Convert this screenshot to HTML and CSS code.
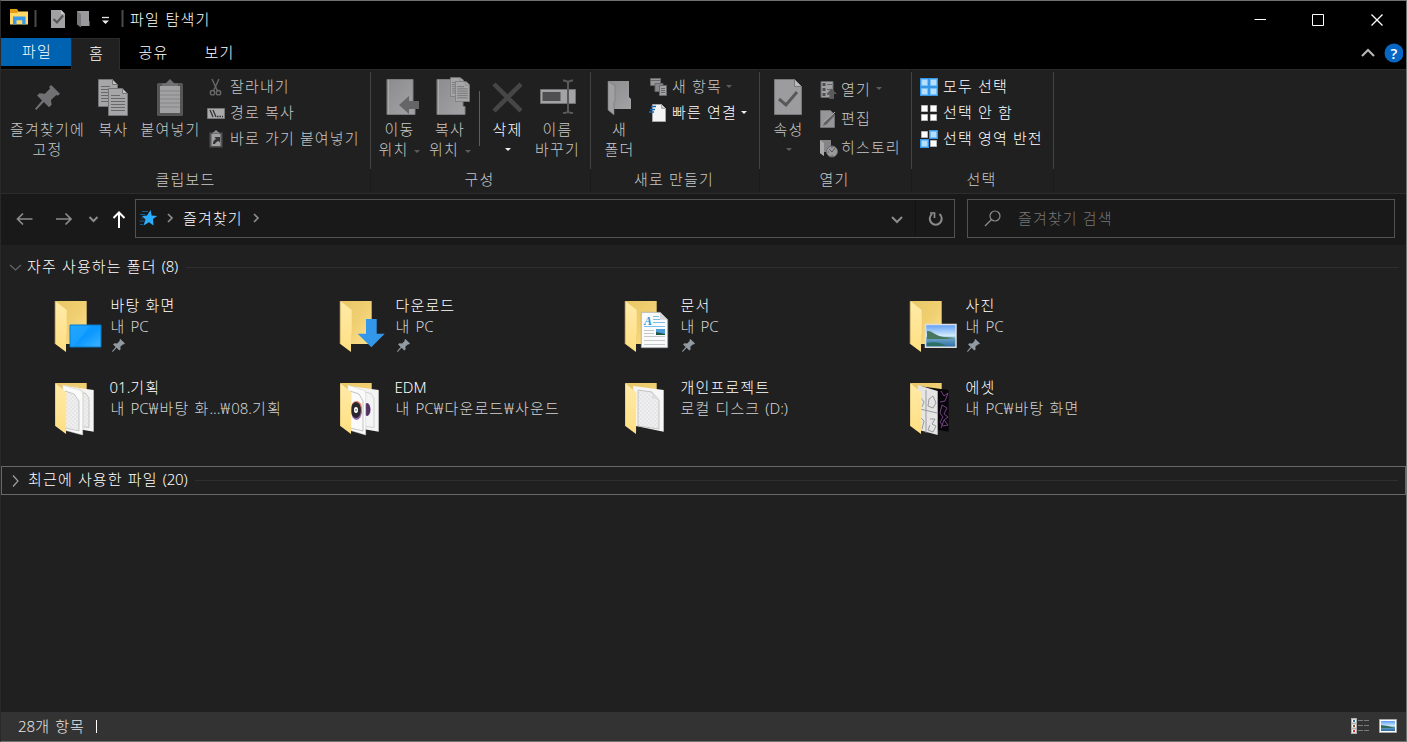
FILE: index.html
```html
<!DOCTYPE html>
<html lang="ko">
<head>
<meta charset="utf-8">
<title>파일 탐색기</title>
<link rel="stylesheet" href="styles.css">
</head>
<body>
<svg class="defs" width="0" height="0">
  <defs>
    <linearGradient id="gBack" x1="0" y1="0" x2="1" y2="1"><stop offset="0" stop-color="#e9c766"/><stop offset=".5" stop-color="#f0cf72"/><stop offset="1" stop-color="#ffe38e"/></linearGradient>
    <linearGradient id="gFlap" x1="0" y1="0" x2="0" y2="1"><stop offset="0" stop-color="#ffeaa8"/><stop offset="1" stop-color="#ffdf82"/></linearGradient>
    <linearGradient id="gBlue" x1="0" y1="0" x2="1" y2="1"><stop offset="0" stop-color="#1aa3ff"/><stop offset=".5" stop-color="#0a97ff"/><stop offset="1" stop-color="#3cb4ff"/></linearGradient>
    <linearGradient id="gSky" x1="0" y1="0" x2="0" y2="1"><stop offset="0" stop-color="#5b9cf5"/><stop offset=".5" stop-color="#d4ecfb"/><stop offset=".6" stop-color="#6fa6c4"/><stop offset="1" stop-color="#2c6aa8"/></linearGradient>
    <linearGradient id="gGray" x1="0" y1="0" x2="1" y2="1"><stop offset="0" stop-color="#8c8c8e"/><stop offset="1" stop-color="#a3a3a5"/></linearGradient>
    <pattern id="check" width="4" height="4" patternUnits="userSpaceOnUse"><path d="M0 0h4v4H0z" fill="#efefef"/><path d="M0 0l4 4M4 0l-4 4" stroke="#e2e3e5" stroke-width=".7"/></pattern>
  </defs>
  <symbol id="folder" viewBox="0 0 52 56"><path d="M2.300 2h31.400v43H2.300z" fill="url(#gBack)"/></symbol>
  <symbol id="flap" viewBox="0 0 52 56"><path d="M2.300 2L13.700 11V35L13 36V53L2.300 45z" fill="url(#gFlap)"/><path d="M2 2v43" stroke="#b79b57" stroke-width=".6"/></symbol>
  <symbol id="flapFull" viewBox="0 0 52 56"><path d="M2.300 2.300L13.500 11.500L13 53L2.300 45z" fill="url(#gFlap)"/></symbol>
  <symbol id="pin" viewBox="0 0 24 24"><path d="M15.500 0L24 8.300L21.700 10.300L20.500 9.600L15.300 14.500L16 19L13.500 21.300L8.500 16.300L1.300 24L0 22.800L6.800 14.800L2 10L4.300 8L9.500 8.500L14.500 3.300L13.600 2z"/></symbol>
  <symbol id="page" viewBox="0 0 20 28"><path d="M.5.500h14l5 5v22H.500z" fill="#a6a6a8" stroke="#747476"/><path d="M14.500.500v5h5z" fill="#c2c2c4" stroke="#747476"/><path d="M3 7.500h9M3 10.500h14M3 13.500h14M3 16.500h14M3 19.500h14M3 22.500h14" stroke="#68686a"/></symbol>
</svg>

<div class="window">
  <header class="titlebar">
    <div class="quick">
      <svg width="120" height="26" viewBox="0 0 120 26">
        <path d="M1 3.500h7l1 2h10v13H1z" fill="#ffd867"/><path d="M1 3h7l1.500 2.500L8 7H1z" fill="#e59d13"/>
        <path d="M4 18.500v-8h12.500v8h-3.300v-4.300H7.500v4.300z" fill="#3897e7"/>
        <path d="M26.500 4v17M113.500 4v17" stroke="#4b4b4b" stroke-width="2"/>
        <path d="M42 4h10l4 4v14H42z" fill="#a1a1a3"/><path d="M52 4l4 4h-4z" fill="#cacaca"/><path d="M44.500 13l3.500 3.500 6-7" stroke="#565658" stroke-width="2.200" fill="none"/>
        <path d="M68 5h12v10h.500v5H71z" fill="#9a9a9c"/><path d="M68 5l4 3v13.500l-4-3z" fill="#777779"/>
        <path d="M93 11.500h7" stroke="#e5e5e5" stroke-width="1.300"/><path d="M93 14.500h7l-3.500 3.500z" fill="#eee"/>
      </svg>
    </div>
    <h1>파일 탐색기</h1>
    <div class="winctl">
      <svg width="130" height="20" viewBox="0 0 130 20" fill="none" stroke="#fff"><path d="M.5 9.500h11.500M58.500 4.500h11v11h-11z"/><path d="M117.500 4.500l11 11M128.500 4.500l-11 11" stroke-width="1.300"/></svg>
    </div>
  </header>

  <nav class="tabs">
    <span class="tab file">파일</span><span class="tab home">홈</span><span class="tab">공유</span><span class="tab view">보기</span>
    <svg class="help" width="42" height="20" viewBox="0 0 42 20"><path d="M1 13l6-6 6 6" fill="none" stroke="#b5b5b5" stroke-width="2.200"/><circle cx="33" cy="10" r="9.500" fill="#0867c5"/><text x="33" y="15.500" class="qmark">?</text></svg>
  </nav>

  <section class="ribbon">
    <div class="group g1">
      <div class="body">
        <div class="big w92"><svg class="ico" width="26" height="40"><use href="#pin" x="1" y="8" width="25" height="25" fill="#717173"/></svg><span>즐겨찾기에<br>고정</span></div>
        <div class="big w40"><svg class="ico" width="30" height="40"><use href="#page" x="0" y="2" width="20" height="28"/><use href="#page" x="10" y="11" width="20" height="28"/></svg><span>복사</span></div>
        <div class="big w74"><svg class="ico" width="28" height="40"><rect x="1" y="6" width="26" height="33" rx="1.500" fill="#565656"/><path d="M4 9h20v27H4z" fill="#a1a1a3"/><path d="M4 14h20M4 18h20M4 22h20M4 26h20M4 30h20" stroke="#858587"/><path d="M6 9V6.500h3.500L14 2l4.500 4.500H22V9z" fill="#717173"/></svg><span>붙여넣기</span></div>
        <ul class="list">
          <li><svg width="18" height="20" fill="none" stroke="#68686a" stroke-width="1.400"><path d="M5 2l5.500 12M12 2L6.500 14"/><circle cx="5.500" cy="15.700" r="2.200"/><circle cx="11.500" cy="15.700" r="2.200"/></svg>잘라내기</li>
          <li><svg width="18" height="20"><path d="M.5 5.500h17v10H.500z" fill="#aaaaac" stroke="#777"/><path d="M3 7l3 7M6 7l3 7M10 13.500h1.500M12.500 13.500H14M15 13.500h1" stroke="#333" stroke-width="1.300"/></svg>경로 복사</li>
          <li><svg width="18" height="20"><path d="M2.500 3.500h13v15h-13z" fill="#515153"/><path d="M4.500 5h9v12h-9z" fill="#a1a1a3"/><path d="M5 4.500L9 1l4 3.500z" fill="#8b8b8d"/><path d="M6 15c0-3 1-4 3-5L7.500 8H13v5.500l-1.500-1.500C9 13 8.500 14 8 15z" fill="#333"/></svg>바로 가기 붙여넣기</li>
        </ul>
      </div>
      <div class="label">클립보드</div>
    </div>

    <div class="group g2">
      <div class="body">
        <div class="big w56"><svg class="ico shift" width="34" height="40"><path d="M1 2.500h26v27h2v8H1z" fill="url(#gGray)" stroke="#7c7c7e"/><path d="M2.500 3v34" stroke="#aaa"/><path d="M13 28l10-9v5h10v8H23v5z" fill="#656567"/></svg><span>이동<br>위치<i class="arr"></i></span></div>
        <div class="big w45"><svg class="ico shift" width="34" height="40"><path d="M1 2.500h26v27h2v8H1z" fill="url(#gGray)" stroke="#7c7c7e"/><path d="M2.500 3v34" stroke="#aaa"/><use href="#page" x="14" y="0" width="14" height="20"/><use href="#page" x="19" y="4" width="15" height="21"/></svg><span>복사<br>위치<i class="arr"></i></span></div>
        <div class="vsep"></div>
        <div class="big w40 on"><svg class="ico" width="30" height="40"><path d="M2 7l27 27M29 7L2 34" stroke="#464646" stroke-width="4.500"/></svg><span>삭제<br><i class="arr solo"></i></span></div>
        <div class="big w60"><svg class="ico wide" width="38" height="40"><path d="M1.500 12.500h35v14h-35z" fill="#a3a3a5" stroke="#737375"/><path d="M3.500 15h18v9h-18z" fill="#4f4f51"/><path d="M24 3.500c3 0 5 .500 5 3v27c0 2-2 2.500-5 2.500M34 3.500c-3 0-5 .500-5 3M34 36c-3 0-5-.500-5-2.500" fill="none" stroke="#59595b" stroke-width="2"/></svg><span>이름<br>바꾸기</span></div>
      </div>
      <div class="label">구성</div>
    </div>

    <div class="group g3">
      <div class="body">
        <div class="big w56"><svg class="ico" width="26" height="40"><path d="M2 4h21v16l2 2v10H8z" fill="url(#gGray)"/><path d="M2 4l7 5v15l-1 1v13L2 33z" fill="#a0a0a2" stroke="#777" stroke-width=".6"/></svg><span>새<br>폴더</span></div>
        <ul class="list">
          <li><svg width="19" height="20" stroke="#676769"><path d="M1.500 1.500h10v7h-10z" fill="#98989a"/><path d="M6 6.500h8v8H6z" fill="#89898b"/><path d="M10.500 8.500h7v10h-7z" fill="#a1a1a3"/><path d="M12 11.500h4M12 13.500h4M12 15.500h4M1.500 3.500h10"/></svg>새 항목<i class="arr"></i></li>
          <li class="on"><svg width="19" height="20"><path d="M3.500 1.500h9l4 4v13h-13z" fill="#f4f4f4" stroke="#a7a7a7"/><path d="M12.500 1.500v4h4" fill="#ccc" stroke="#aaa"/><path d="M2 3.500h5M1 6.500h5M0 9h5" stroke="#1769b4" stroke-width="1.500"/></svg>빠른 연결<i class="arr"></i></li>
        </ul>
      </div>
      <div class="label">새로 만들기</div>
    </div>

    <div class="group g4">
      <div class="body">
        <div class="big w56"><svg class="ico" width="28" height="40"><path d="M.5 2.500h20l7 7v28H.500z" fill="#9c9c9e" stroke="#777779"/><path d="M20.500 2.500v7h7" fill="#bbb" stroke="#777"/><path d="M5 22l7 6L23 15" fill="none" stroke="#58585a" stroke-width="3"/></svg><span>속성<br><i class="arr solo"></i></span></div>
        <ul class="list tall">
          <li><svg width="18" height="20"><path d="M1 1.500h12v16H1z" fill="#a0a0a2" stroke="#69696b"/><path d="M2.500 3h3v3h-3zM2.500 8h3v3h-3zM2.500 13h3v3h-3z" fill="#4f4f51"/><path d="M7 4.500h5M7 9.500h5M7 14.500h3" stroke="#666"/><path d="M11.500 8.500L17 14h-3v5H9.500v-5h-3z" fill="#5b5b5d"/></svg>열기<i class="arr"></i></li>
          <li><svg width="18" height="20"><path d="M.5 1.500h10l4 4v13H.500z" fill="#969698" stroke="#717173"/><path d="M3 17l1.500-4L13 4l2 2-8 9z" fill="#616163"/><path d="M4 13l11-10" stroke="#b6b6b8"/></svg>편집</li>
          <li><svg width="18" height="20"><path d="M0 2h11v12H4v4l-4-3z" fill="#858587"/><path d="M0 2l4 3v13l-4-3z" fill="#aaa"/><circle cx="12" cy="13.500" r="5.500" fill="#9a9a9c" stroke="#68686a"/><path d="M9 11l3 3 3-4M8 14h1M12 9v1M12 17v1" stroke="#555" fill="none"/></svg>히스토리</li>
        </ul>
      </div>
      <div class="label">열기</div>
    </div>

    <div class="group g5">
      <div class="body">
        <ul class="list sel on">
          <li><svg width="19" height="20"><path d="M0 1h18v18H0z" fill="#3697e8"/><path d="M1.500 2.500h6v6h-6zM10.500 2.500h6v6h-6zM1.500 11.500h6v6h-6zM10.500 11.500h6v6h-6z" fill="#b5dfff" stroke="#78bff5"/></svg>모두 선택</li>
          <li><svg width="19" height="20"><path d="M1.500 2.500h6v6h-6zM10.500 2.500h6v6h-6zM1.500 11.500h6v6h-6zM10.500 11.500h6v6h-6z" fill="#fff" stroke="#b7b7b7"/></svg>선택 안 함</li>
          <li><svg width="19" height="20"><path d="M9 1h9v9H9zM0 10h9v9H0z" fill="#3697e8"/><path d="M1.500 2.500h6v6h-6zM10.500 11.500h6v6h-6z" fill="#fff" stroke="#b7b7b7"/><path d="M10.500 2.500h6v6h-6zM1.500 11.500h6v6h-6z" fill="#b5dfff" stroke="#78bff5"/></svg>선택 영역 반전</li>
        </ul>
      </div>
      <div class="label">선택</div>
    </div>
  </section>

  <section class="navbar">
    <svg class="arrows" width="134" height="50" viewBox="1 194 134 50" fill="none" stroke="#8b8b8b" stroke-width="1.700">
      <path d="M32.500 219H18M23 213.500L17.500 219l5.500 5.500M56 219h14.500M65.500 213.500L71 219l-5.500 5.500"/><path d="M89.500 217l4 4 4-4" stroke-width="2"/><path d="M119 228v-15M113.500 218l5.500-5.500 5.500 5.500" stroke="#fff" stroke-width="2"/>
    </svg>
    <div class="address">
      <svg width="46" height="38" viewBox="136 200 46 38"><path d="M150.500 210l1.200 5.500 5.500.500-4.200 3 .500 6.500-4.500-3.300-5.500 3.300 2-6-3.500-3.500 5-.500z" fill="#2badff"/><path d="M142 211.500h6M140 214.500h5M141 218h3M139.500 221h5M140 224.500h3" stroke="#145c8d"/><path d="M168 214l4 4-4 4" fill="none" stroke="#8b8b8b" stroke-width="1.700"/></svg>
      <span>즐겨찾기</span>
      <svg width="12" height="38" viewBox="0 0 12 38"><path d="M4 14l4 4-4 4" fill="none" stroke="#8b8b8b" stroke-width="1.700"/></svg>
      <svg class="end" width="68" height="37" viewBox="886 200 68 37" fill="none" stroke="#8b8b8b" stroke-width="2"><path d="M892 217l5 5 5-5"/><path d="M915.500 200v37" stroke="#121212" stroke-width="1"/><path d="M932 214a6 6 0 1 0 7.500 0"/><path d="M930 213h4.500v5" stroke-width="1.700"/></svg>
    </div>
    <div class="search"><svg width="50" height="37" viewBox="968 200 50 37" fill="none" stroke="#8d8d8d" stroke-width="1.200"><circle cx="995" cy="216" r="5"/><path d="M991.500 219.500L985 226"/></svg><span>즐겨찾기 검색</span></div>
  </section>

  <main class="content">
    <div class="head"><svg width="26" height="20" fill="none" stroke="#666" stroke-width="1.200"><path d="M9 8l5.500 5L20 8"/></svg><h2>자주 사용하는 폴더 <b>(8)</b></h2><hr></div>
    <div class="tiles">
      <article><svg class="fold" viewBox="0 0 52 56"><use href="#folder"/><use href="#flap"/><path d="M17 26h31v22H17z" fill="url(#gBlue)" stroke="#0876c4"/><path d="M37 26.500L21 47.500H17.500V26.500z" fill="#28aaff" opacity=".5"/></svg><div class="txt"><strong>바탕 화면</strong><span>내 <b>PC</b></span><svg class="tpin"><use href="#pin"/></svg></div></article>
      <article><svg class="fold" viewBox="0 0 52 56"><use href="#folder"/><use href="#flap"/><path d="M28 20h10.700v14.700h8L33.300 48.300 19.700 34.700H28z" fill="#3498ea"/></svg><div class="txt"><strong>다운로드</strong><span>내 <b>PC</b></span><svg class="tpin"><use href="#pin"/></svg></div></article>
      <article><svg class="fold" viewBox="0 0 52 56"><use href="#folder"/><use href="#flap"/><path d="M18.300 13.300H37l7.700 7.400v28H18.300z" fill="#fafafa" stroke="#9aa2a9" stroke-width=".7"/><path d="M37 13.300v7.400h7.700z" fill="#d5d5d8"/><text x="21" y="25.500" class="docA">A</text><path d="M30 17.500h6M30 20.500h7M30 23.500h12M21 27.500h21" stroke="#77c0ec"/><path d="M21 31.500h10M21 34.500h10M21 37.500h21M21 41.500h21M21 45.500h21" stroke="#c5c8cb"/><path d="M33 30h9v6h-9z" fill="#4d9ed8"/><path d="M33 33l9 2v1h-9z" fill="#1f5742"/></svg><div class="txt"><strong>문서</strong><span>내 <b>PC</b></span><svg class="tpin"><use href="#pin"/></svg></div></article>
      <article><svg class="fold" viewBox="0 0 52 56"><use href="#folder"/><use href="#flap"/><path d="M17.500 25.500h30.500v22.700H17.500z" fill="url(#gSky)" stroke="#dedede" stroke-width="1.500"/><path d="M19 32c5-1 8 5 17 6l11 1-8 1H19z" fill="#47775f"/><path d="M19 44c8-2 15 0 19 3H19z" fill="#2b7065"/></svg><div class="txt"><strong>사진</strong><span>내 <b>PC</b></span><svg class="tpin"><use href="#pin"/></svg></div></article>
      <article><svg class="fold" viewBox="0 0 52 56"><use href="#folder"/><path d="M11 5l29.700 4v41.700L25 48z" fill="#f4f4f5"/><path d="M27 11l6 1.500 3 5v29l-8-1z" fill="url(#check)" stroke="#9a9a9c" stroke-width=".5"/><path d="M9.700 4l20 6v44L11 49z" fill="#fafafa" stroke="#ccc" stroke-width=".5"/><path d="M12 10l9 3 5 7v30l-14-3z" fill="url(#check)" stroke="#a9a9a9" stroke-width=".6"/><path d="M9.700 4l15 2 6 7v36" fill="none" stroke="#e9dab0" stroke-width=".7"/><use href="#flapFull"/></svg><div class="txt"><strong class="lat"><b>01.</b>기획</strong><span>내 <b>PC<i class="won">₩</i></b>바탕 화<b>...<i class="won">₩</i>08.</b>기획</span></div></article>
      <article><svg class="fold" viewBox="0 0 52 56"><use href="#folder"/><path d="M11 5l29.700 4v41.700L25 48z" fill="#f4f4f5"/><ellipse cx="29" cy="28.500" rx="3.500" ry="6.500" fill="#553064"/><path d="M27 11l6 1.500 3 5v29l-8-1" fill="none" stroke="#b9b9ba" stroke-width=".6"/><path d="M9.700 4l18 6v44L11 49z" fill="#fafafa" stroke="#ccc" stroke-width=".5"/><ellipse cx="18.500" cy="30" rx="5.500" ry="9" fill="#9267a8"/><ellipse cx="18.500" cy="27" rx="5.500" ry="7" fill="#e88467"/><ellipse cx="18" cy="29" rx="5" ry="8" fill="#29272d"/><ellipse cx="18" cy="29" rx="2" ry="3" fill="#fff"/><circle cx="18" cy="29" r=".8" fill="#333"/><path d="M12 10l9 3 4 7v30l-13-3" fill="none" stroke="#aaa" stroke-width=".7"/><use href="#flapFull"/></svg><div class="txt"><strong class="lat"><b>EDM</b></strong><span>내 <b>PC<i class="won">₩</i></b>다운로드<b><i class="won">₩</i></b>사운드</span></div></article>
      <article><svg class="fold" viewBox="0 0 52 56"><use href="#folder"/><path d="M10 5l30.700 4v41.700L13 45z" fill="#f7f7f8"/><path d="M15 9l14 2 7 8v29l-21-3z" fill="url(#check)" stroke="#a5a5a7" stroke-width=".6"/><path d="M29 11v6l7 2z" fill="#ddd"/><use href="#flapFull"/></svg><div class="txt"><strong>개인프로젝트</strong><span>로컬 디스크 <b>(D:)</b></span></div></article>
      <article><svg class="fold" viewBox="0 0 52 56"><use href="#folder"/><path d="M10 5l30.700 4v41.700L25 48z" fill="#08060a"/><path d="M33 10l3 5 4-3-3 8-5 1M34 24l5 3-3 6 4 3-4 3 4 5-5 1-3-4 3-5-3-4zM36 39l-3 8" fill="none" stroke="#724384"/><path d="M9.700 4l20 6v44L11 49z" fill="#e5e5e5"/><path d="M12 28l17 4M18 9v43M21 18l4-3 3 7-3 5-5-2zM13 17l3 4-2 5M22 38h5l-3 5 4 2-3 6-5-2 2-5M13 37l3 3-2 8" fill="none" stroke="#929294" stroke-width=".9"/><use href="#flapFull"/></svg><div class="txt"><strong>에셋</strong><span>내 <b>PC<i class="won">₩</i></b>바탕 화면</span></div></article>
    </div>
    <div class="head boxed"><svg width="26" height="20" fill="none" stroke="#a0a0a0" stroke-width="1.200"><path d="M12 4.500l5 5.500-5 5.500"/></svg><h2>최근에 사용한 파일 <b>(20)</b></h2><hr></div>
  </main>

  <footer class="status">
    <span><b>28</b>개 항목</span><i class="caret"></i>
    <svg class="views" width="48" height="20" viewBox="1351 716 48 20"><path d="M1351 718h6v16h-6z" fill="#b0b0b0"/><path d="M1352 719.500h4v3h-4zM1352 724.500h4v3h-4zM1352 729.500h4v3h-4z" fill="#fff"/><path d="M1353 720h2v2h-2z" fill="#32759d"/><path d="M1353 725h2v2h-2z" fill="#99503b"/><path d="M1353 730h2v2h-2z" fill="#d62e20"/><path d="M1358 720.500h5M1364 720.500h5M1358 725.500h5M1364 725.500h5M1358 730.500h5M1364 730.500h5" stroke="#7b7b7b"/><path d="M1379.500 719.500h17v13h-17z" fill="#fff" stroke="#aaa"/><path d="M1381 721h14v10h-14z" fill="url(#gSky)"/><path d="M1381 725l7 1 7 2h-14z" fill="#356c61"/></svg>
  </footer>
</div>
</body>
</html>
```
FILE: styles.css
```css
* { box-sizing: border-box; }
body {
  margin: 0;
  background: #202020;
  color: #fff;
  font: 15px/20px "Noto Sans", "Noto Sans CJK KR", sans-serif;
  letter-spacing: 1.15px;
  font-weight: 300;
}
h1, h2, ul, hr { margin: 0; padding: 0; font: inherit; }
ul { list-style: none; }
b { font-weight: inherit; letter-spacing: 0; }
strong { font-weight: inherit; }
svg { display: block; flex: none; }
.defs { position: absolute; }
.window {
  width: 1407px; height: 742px; overflow: hidden;
  display: flex; flex-direction: column;
  border: 1px solid #707070;
  border-left-color: #292929;
  background: #202020;
  white-space: nowrap;
}
.titlebar { height: 37px; background: #000; display: flex; align-items: center; padding-bottom: 2px; flex: none; }
.quick { padding-left: 8px; }
.titlebar h1 { margin-left: 1px; letter-spacing: 1.3px; }
.winctl { margin-left: auto; margin-right: 22px; margin-top: 2px; }

.tabs { height: 32px; background: #000; display: flex; border-bottom: 1px solid #2b2b2b; flex: none; }
.tab { width: 65px; padding-left: 2px; text-align: center; line-height: 28px; }
.file { width: 70px; height: 28px; line-height: 27px; background: #0063b1; }
.home { width: 49px; height: 32px; background: #202020; border: 1px solid #2b2b2b; border-bottom: 0; }
.view { width: 67px; }
.help { margin: 5px 3px 0 auto; }
.qmark { font: 600 15px "Open Sans", sans-serif; fill: #fff; text-anchor: middle; letter-spacing: 0; }

.ribbon { height: 124px; display: flex; border-bottom: 1px solid #2c2c2c; flex: none; color: #c8c8c8; }
.group { position: relative; display: flex; flex-direction: column; border-right: 1px solid #1a1a1a; height: 121px; }
.group::after { content: ""; position: absolute; right: -1px; top: 2px; width: 1px; height: 97px; background: #424242; }
.g1 { width: 370px; }
.g2 { width: 220px; }
.g3 { width: 169px; }
.g4 { width: 152px; }
.g5 { width: 142px; }
.body { display: flex; height: 99px; }
.label { text-align: center; line-height: 20px; }
.g2 .label, .g3 .label, .g4 .label, .g5 .label { padding-right: 2px; }
.on { color: #fff; }
.big { text-align: center; padding-top: 7px; display: flex; flex-direction: column; align-items: center; }
.big span { margin-top: 2px; padding-left: 1px; line-height: 20px; }
.shift { margin-left: 7px; }
.wide { margin-left: 2px; }
.w92 { width: 92px; } .w40 { width: 40px; } .w45 { width: 45px; }
.w56 { width: 56px; } .w60 { width: 60px; } .w74 { width: 74px; }
.vsep { width: 1px; height: 55px; background: #5e5e5e; margin: 21px 7px 0; }
.list { padding-top: 3px; }
.list li { height: 26px; display: flex; align-items: center; gap: 4px; }
.list svg { margin-top: 2px; }
.g1 .list li { gap: 5px; }
.g3 .list { padding-left: 2px; }
.g4 .list { padding-left: 4px; }
.tall { padding-top: 4px; }
.tall li { height: 29px; gap: 3px; }
.sel { padding-left: 8px; }
.arr { display: inline-block; border: 3.5px solid transparent; border-top-color: #5c5c5c; border-bottom: 0; vertical-align: middle; margin-left: 6px; }
.list .arr { margin-left: 0; }
.g4 .list .arr { margin-left: 2px; }
.on .arr { border-top-color: #eee; }
.arr.solo { margin: 0 0 4px; }

.navbar { height: 51px; background: #191919; display: flex; flex: none; }
.address, .search { height: 39px; margin-top: 5px; border: 1px solid #535353; display: flex; align-items: center; }
.address { width: 820px; }
.address span { margin-left: 1px; margin-right: 7px; padding-bottom: 2px; }
.end { margin-left: auto; }
.search { width: 428px; margin-left: 12px; color: #777; }
.search span { padding-bottom: 2px; }

.content { flex: 1; }
.head { display: flex; align-items: center; height: 28px; margin-top: 8px; }
.head h2 { padding-bottom: 2px; }
.head h2 b { letter-spacing: -.2px; }
.head hr { flex: 1; border: 0; height: 1px; background: #2f2f2f; margin: 0 7px 0 8px; }
.boxed { border: 1px solid #686868; height: 29px; margin-top: 0; }
.boxed svg { margin-left: -1px; margin-right: 0; }
.boxed h2 { margin-left: 1px; padding-bottom: 3px; }
.tiles { display: grid; grid-template-columns: repeat(4, 285px); grid-auto-rows: 82px; padding: 14px 0 7px 52px; height: 185px; }
article { display: flex; }
.fold { width: 52px; height: 56px; margin-top: 4px; margin-left: -.5px; }
.txt { display: flex; flex-direction: column; margin-left: 6px; line-height: 21px; color: #d2d2d2; }
.txt strong { color: #fff; }
.txt .lat { margin-left: -1px; }
.won { font-style: normal; letter-spacing: 1.3px; }
.tpin { width: 13px; height: 13px; margin-top: 2px; margin-left: 1px; fill: #929ba3; }
.docA { font: italic bold 12px "Liberation Serif", serif; fill: #249ade; letter-spacing: 0; }

.status { height: 29px; background: #333; display: flex; align-items: center; padding: 0 0 2px 17px; flex: none; color: #e5e5e5; }
.caret { width: 1px; height: 13px; background: #fff; margin: 2px 0 0 11px; }
.views { margin-left: auto; margin-right: 7px; }
```
